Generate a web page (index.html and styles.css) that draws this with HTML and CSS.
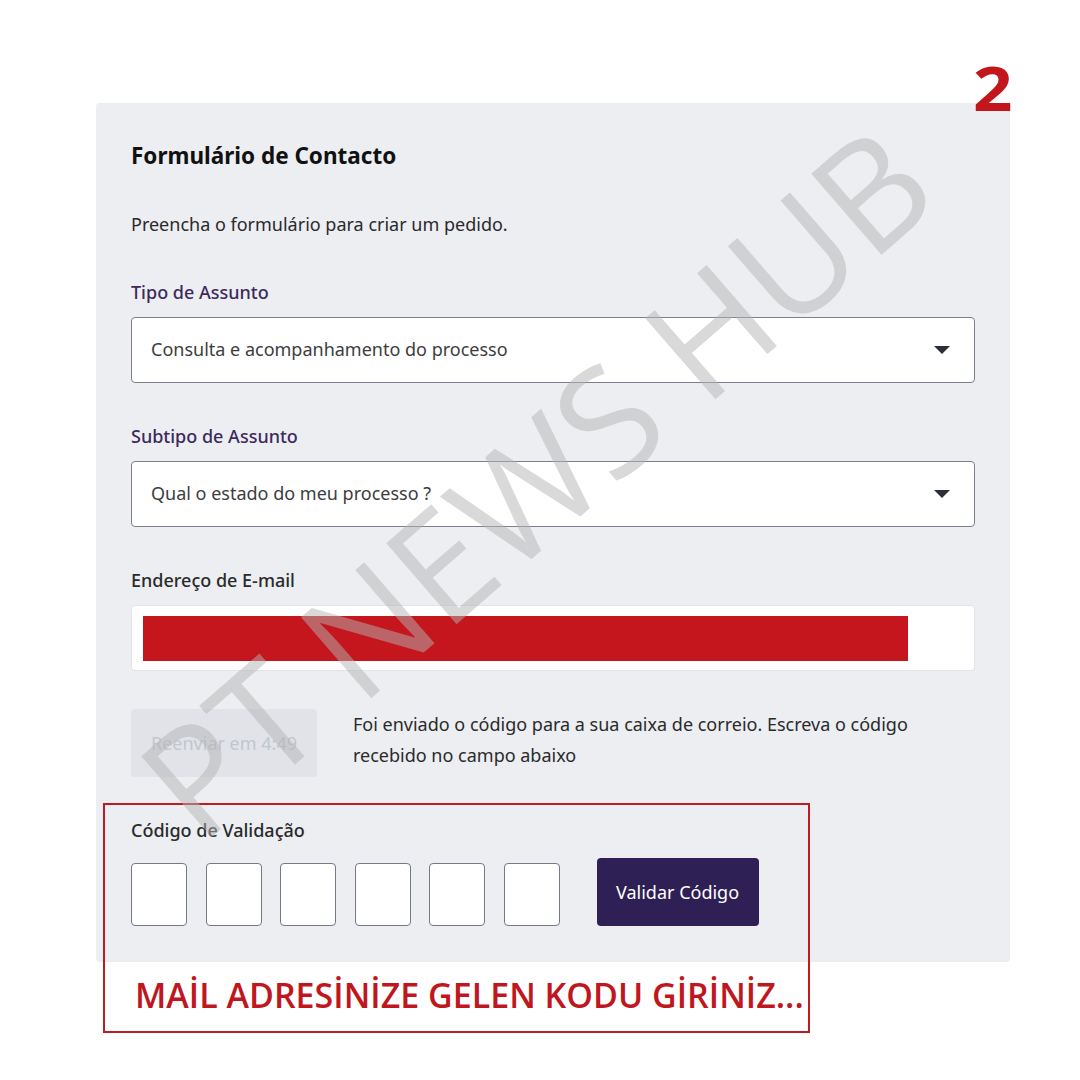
FILE: index.html
```html
<!DOCTYPE html>
<html lang="pt">
<head>
    <meta charset="UTF-8">
    <meta name="viewport" content="width=device-width, initial-scale=1.0">
    <title>Formulário de Contacto</title>
    <link rel="stylesheet" href="styles.css">
</head>
<body>
    <div class="page">
        <span class="step">2</span>

        <div class="panel">
            <h1>Formulário de Contacto</h1>
            <p class="intro">Preencha o formulário para criar um pedido.</p>

            <label class="field-label accent">Tipo de Assunto</label>
            <div class="select">
                <span>Consulta e acompanhamento do processo</span>
                <span class="caret"></span>
            </div>

            <label class="field-label accent">Subtipo de Assunto</label>
            <div class="select">
                <span>Qual o estado do meu processo ?</span>
                <span class="caret"></span>
            </div>

            <label class="field-label">Endereço de E-mail</label>
            <div class="email">
                <div class="redact"></div>
            </div>

            <div class="resend-row">
                <button class="resend" disabled>Reenviar em 4:49</button>
                <p>Foi enviado o código para a sua caixa de correio. Escreva o código recebido no campo abaixo</p>
            </div>

            <label class="field-label">Código de Validação</label>
            <div class="code-row">
                <input class="digit" maxlength="1">
                <input class="digit" maxlength="1">
                <input class="digit" maxlength="1">
                <input class="digit" maxlength="1">
                <input class="digit" maxlength="1">
                <input class="digit" maxlength="1">
                <button class="validate">Validar Código</button>
            </div>
        </div>

        <div class="note">
            <span>MAİL ADRESİNİZE GELEN KODU GİRİNİZ...</span>
        </div>

        <div class="watermark">PT NEWS HUB</div>
    </div>
</body>
</html>
```

FILE: styles.css
```css
body {
    margin: 0;
    background: #fff;
    font-family: "Noto Sans", "Open Sans", sans-serif;
    color: #222;
}
.page {
    position: relative;
    width: 1080px;
    height: 1080px;
    padding: 103px 0 0 96px;
    box-sizing: border-box;
    overflow: hidden;
}
.step {
    position: absolute;
    top: 47px;
    left: 973px;
    font-family: "Open Sans", sans-serif;
    font-weight: 700;
    font-size: 60px;
    line-height: normal;
    color: #c3161c;
    transform: scaleX(1.15);
    transform-origin: left center;
}
.panel {
    width: 914px;
    height: 859px;
    box-sizing: border-box;
    background: #eceef2;
    border-radius: 4px;
    padding: 39px 35px 0 35px;
    display: flex;
    flex-direction: column;
}
h1 {
    margin: 0;
    font-size: 22.5px;
    line-height: 28px;
    font-weight: 700;
    color: #111;
}
.intro {
    margin: 42px 0 0 0;
    font-size: 18px;
    line-height: 24px;
    color: #2a2a2a;
}
.field-label {
    margin-top: 44px;
    font-size: 18px;
    line-height: 24px;
    font-weight: 500;
    color: #2a2a2a;
}
.field-label.accent {
    color: #3d2a5c;
}
.select + .field-label,
.email + .field-label {
    margin-top: 41px;
}
.select {
    margin-top: 13px;
    height: 66px;
    box-sizing: border-box;
    background: #fff;
    border: 1px solid #7b808c;
    border-radius: 4px;
    padding: 0 24px 2px 19px;
    display: flex;
    align-items: center;
    justify-content: space-between;
    font-size: 18px;
    color: #3d3d3d;
}
.caret {
    width: 0;
    height: 0;
    margin-top: 2px;
    border-left: 8px solid transparent;
    border-right: 8px solid transparent;
    border-top: 8px solid #2b2f36;
}
.email {
    margin-top: 13px;
    height: 66px;
    box-sizing: border-box;
    background: #fff;
    border: 1px solid #e1e3e8;
    border-radius: 4px;
    padding: 10px 66px 9px 11px;
}
.redact {
    height: 45px;
    background: #c4161c;
}
.resend-row {
    margin-top: 38px;
    display: flex;
    align-items: flex-start;
    gap: 36px;
}
.resend {
    width: 186px;
    height: 68px;
    flex: none;
    border: none;
    border-radius: 4px;
    background: #e1e3e8;
    color: #c2c6ce;
    font-family: inherit;
    font-size: 18px;
}
.resend-row p {
    margin: 0;
    font-size: 18px;
    line-height: 31px;
    color: #2a2a2a;
    width: 580px;
}
.resend-row + .field-label {
    margin-top: 41px;
}
.code-row {
    margin-top: 16px;
    display: flex;
    align-items: flex-end;
    gap: 18.6px;
}
.digit {
    width: 56px;
    height: 63px;
    box-sizing: border-box;
    border: 1px solid #737987;
    border-radius: 4px;
    background: #fff;
    margin: 0;
    padding: 0;
}
.validate {
    margin-left: 18px;
    width: 162px;
    height: 68px;
    border: none;
    border-radius: 4px;
    background: #2e1f55;
    color: #fff;
    font-family: inherit;
    font-size: 18px;
}
.note {
    position: absolute;
    left: 103px;
    top: 803px;
    width: 707px;
    height: 230px;
    box-sizing: border-box;
    border: 2px solid #bd1c24;
    display: flex;
    align-items: flex-end;
    padding: 0 0 19px 30px;
}
.note span {
    font-family: "Open Sans", sans-serif;
    font-weight: 600;
    font-size: 34px;
    line-height: 34px;
    color: #c0161d;
    white-space: nowrap;
}
.watermark {
    position: absolute;
    left: 534px;
    top: 480px;
    transform: translate(-50%, -50%) rotate(-41deg);
    font-family: "Open Sans", sans-serif;
    font-weight: 500;
    font-size: 150px;
    line-height: 1;
    white-space: nowrap;
    color: rgba(180, 180, 180, 0.5);
    pointer-events: none;
}
```
